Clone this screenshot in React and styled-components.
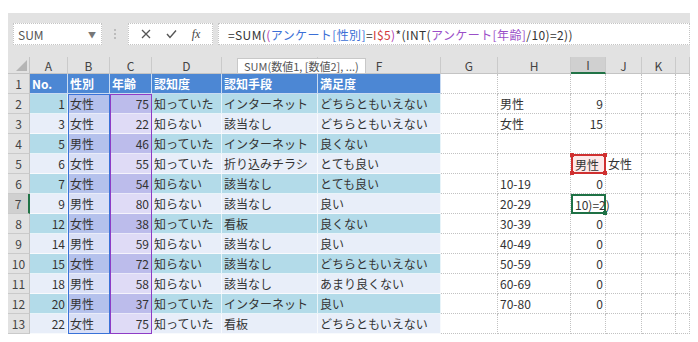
import React from "react";
import styled, { createGlobalStyle } from "styled-components";

const GlobalStyle = createGlobalStyle`
  body {
    margin: 0;
    background: #fff;
    font-family: "Noto Sans CJK JP", "Noto Sans", sans-serif;
  }
`;

const Window = styled.div`
  margin: 13px 0 0 8px;
  width: 682px;
  height: 321px;
  background: #e2e2e2;
  display: flex;
  flex-direction: column;
  overflow: hidden;
`;

const FormulaBar = styled.div`
  display: flex;
  align-items: center;
  height: 22px;
  margin-top: 10px;
  padding-left: 5px;
`;

const NameBox = styled.div`
  width: 89px;
  height: 22px;
  box-sizing: border-box;
  background: #fff;
  border: 1px dotted #c4c4c4;
  display: flex;
  align-items: center;
  justify-content: space-between;
  padding: 0 5px 0 4px;
  font-size: 12px;
  color: #555;
`;

const Caret = styled.span`
  font-size: 8px;
  color: #777;
`;

const Dots = styled.div`
  width: 26px;
  display: flex;
  flex-direction: column;
  align-items: center;
  gap: 2px;
  span {
    width: 2px;
    height: 2px;
    background: #bcbcbc;
  }
`;

const ButtonBox = styled.div`
  width: 85px;
  height: 22px;
  box-sizing: border-box;
  background: #fff;
  border: 1px dotted #c4c4c4;
  display: flex;
  align-items: center;
  justify-content: space-around;
  padding: 0 4px;
  color: #555;
`;

const Fx = styled.span`
  font-family: "Liberation Serif", serif;
  font-style: italic;
  font-size: 12px;
  color: #444;
`;

const FormulaInput = styled.div`
  flex: 1;
  margin-left: 5px;
  height: 22px;
  box-sizing: border-box;
  background: #fff;
  border: 1px dotted #c4c4c4;
  display: flex;
  align-items: center;
  padding-left: 9px;
  font-size: 12px;
  letter-spacing: 0.4px;
  color: #333;
  white-space: nowrap;
`;

const Ref = styled.span`
  color: ${p => p.$color};
`;

const Sheet = styled.div`
  position: relative;
  margin-top: 12px;
  display: grid;
  grid-template-columns: 22px 38px 42px 42px 70px 96px 123px 57px 73px 35px 36px 34px 14px;
  grid-template-rows: 17px repeat(13, 20px);
  font-size: 12px;
`;

const Cell = styled.div`
  grid-column: ${p => p.$c};
  grid-row: ${p => p.$r};
  box-sizing: border-box;
  display: flex;
  align-items: center;
  justify-content: ${p => (p.$right ? "flex-end" : "flex-start")};
  padding: 0 2px 0 2px;
  white-space: nowrap;
  overflow: hidden;
  background: ${p => p.$bg || "#fff"};
  color: ${p => (p.$head ? "#fff" : "#333")};
  font-weight: ${p => (p.$head ? 700 : 400)};
  border-right: 1px ${p => (p.$table ? "solid" : "dotted")} ${p => (p.$table ? "rgba(255,255,255,0.7)" : "#c2c2c2")};
  border-bottom: 1px ${p => (p.$table ? "solid" : "dotted")} ${p => (p.$table ? "rgba(255,255,255,0.7)" : "#c2c2c2")};
`;

const ColHead = styled.div`
  grid-column: ${p => p.$c};
  grid-row: 1;
  box-sizing: border-box;
  display: flex;
  align-items: center;
  justify-content: center;
  font-size: 12px;
  color: #444;
  background: ${p => (p.$active ? "#d0d0d0" : "#e2e2e2")};
  border-right: 1px solid #cacaca;
  border-bottom: ${p => (p.$active ? "2px solid #217346" : "1px solid #c4c4c4")};
`;

const RowHead = styled.div`
  grid-column: 1;
  grid-row: ${p => p.$r};
  box-sizing: border-box;
  display: flex;
  align-items: center;
  justify-content: center;
  font-size: 12px;
  color: #444;
  background: ${p => (p.$active ? "#d0d0d0" : "#e2e2e2")};
  border-bottom: 1px solid #cacaca;
  border-right: ${p => (p.$active ? "2px solid #217346" : "1px solid #c4c4c4")};
`;

const Corner = styled.div`
  grid-column: 1;
  grid-row: 1;
  display: flex;
  align-items: flex-end;
  justify-content: flex-end;
  padding: 0 2px 2px 0;
  border-right: 1px solid #c4c4c4;
  border-bottom: 1px solid #c4c4c4;
`;

const RangeBox = styled.div`
  grid-column: ${p => p.$c};
  grid-row: ${p => p.$r};
  box-sizing: border-box;
  border: ${p => p.$w}px solid ${p => p.$color};
  background: ${p => p.$fill || "transparent"};
  position: relative;
  z-index: 1;
  display: flex;
  align-items: center;
  padding: 0 2px;
  font-size: 12px;
  color: #333;
  white-space: nowrap;
  overflow: visible;
`;

const Handle = styled.span`
  position: absolute;
  width: 4px;
  height: 4px;
  background: ${p => p.$color};
  ${p => (p.$top ? "top: -3px;" : "bottom: -3px;")}
  ${p => (p.$left ? "left: -3px;" : "right: -3px;")}
`;

const Tooltip = styled.div`
  position: absolute;
  left: 229px;
  top: 1px;
  height: 14px;
  padding: 0 6px;
  background: #fff;
  border: 1px solid #c8c8c8;
  font-size: 11px;
  line-height: 14px;
  color: #555;
  white-space: nowrap;
  z-index: 2;
`;

// column E's letter sits under the function tooltip, so it is left blank
const letters = ["A", "B", "C", "D", "", "F", "G", "H", "I", "J", "K", ""];

const table = [
  [1, "女性", 75, "知っていた", "インターネット", "どちらともいえない"],
  [3, "女性", 22, "知らない", "該当なし", "どちらともいえない"],
  [5, "男性", 46, "知っていた", "インターネット", "良くない"],
  [6, "女性", 55, "知っていた", "折り込みチラシ", "とても良い"],
  [7, "女性", 54, "知らない", "該当なし", "とても良い"],
  [9, "男性", 80, "知らない", "該当なし", "良い"],
  [12, "女性", 38, "知っていた", "看板", "良くない"],
  [14, "男性", 59, "知らない", "該当なし", "良い"],
  [15, "女性", 72, "知らない", "該当なし", "どちらともいえない"],
  [18, "男性", 58, "知らない", "該当なし", "あまり良くない"],
  [20, "男性", 37, "知っていた", "インターネット", "良い"],
  [22, "女性", 75, "知っていた", "看板", "どちらともいえない"]
];

const side = {
  2: { H: "男性", I: "9" },
  3: { H: "女性", I: "15" },
  6: { H: "10-19", I: "0" },
  7: { H: "20-29" },
  8: { H: "30-39", I: "0" },
  9: { H: "40-49", I: "0" },
  10: { H: "50-59", I: "0" },
  11: { H: "60-69", I: "0" },
  12: { H: "70-80", I: "0" }
};

const bandBg = ["#b3dbe9", "#b4c1ec", "#bcbceb", "#b3dbe9", "#b3dbe9", "#b3dbe9"];
const lightBg = ["#e8eef9", "#d9dff6", "#dfdbf6", "#e8eef9", "#e8eef9", "#e8eef9"];

function TableRow({ values, row }) {
  const band = row % 2 === 0;
  return values.map((v, i) => (
    <Cell
      key={i}
      $c={i + 2}
      $r={row + 1}
      $table
      $right={typeof v === "number"}
      $bg={band ? bandBg[i] : lightBg[i]}
    >
      {v}
    </Cell>
  ));
}

function PlainRow({ row }) {
  const data = side[row] || {};
  return ["G", "H", "I", "J", "K", "L"].map((k, i) => (
    <Cell key={k} $c={i + 8} $r={row + 1} $right={k === "I"}>
      {data[k] || ""}
    </Cell>
  ));
}

export default function App() {
  const heads = ["No.", "性別", "年齢", "認知度", "認知手段", "満足度"];
  return (
    <>
      <GlobalStyle />
      <Window>
        <FormulaBar>
          <NameBox>
            SUM<Caret>▼</Caret>
          </NameBox>
          <Dots>
            <span />
            <span />
            <span />
          </Dots>
          <ButtonBox>
            <svg width="10" height="10" viewBox="0 0 10 10">
              <path d="M1 1L9 9M9 1L1 9" stroke="#555" strokeWidth="1.3" />
            </svg>
            <svg width="11" height="10" viewBox="0 0 11 10">
              <path d="M1 5L4 8.5L10 1.5" stroke="#555" strokeWidth="1.4" fill="none" />
            </svg>
            <Fx>fx</Fx>
          </ButtonBox>
          <FormulaInput>
            =SUM(<Ref $color="#b03ab0">(</Ref>
            <Ref $color="#3b6fd6">アンケート[性別]</Ref>=
            <Ref $color="#d23a3a">I$5</Ref>
            <Ref $color="#b03ab0">)</Ref>*(INT(
            <Ref $color="#9a4fc8">アンケート[年齢]</Ref>/10)=2))
          </FormulaInput>
        </FormulaBar>
        <Sheet>
          <Corner>
            <svg width="11" height="11" viewBox="0 0 11 11">
              <path d="M11 0L11 11L0 11Z" fill="#b5b5b5" />
            </svg>
          </Corner>
          {letters.map((l, i) => (
            <ColHead key={i} $c={i + 2} $active={l === "I"}>
              {l}
            </ColHead>
          ))}
          {Array.from({ length: 13 }, (_, i) => (
            <RowHead key={i} $r={i + 2} $active={i + 1 === 7}>
              {i + 1}
            </RowHead>
          ))}
          {heads.map((h, i) => (
            <Cell key={h} $c={i + 2} $r={2} $table $head $bg="#4c87d4">
              {h}
            </Cell>
          ))}
          {table.map((values, i) => (
            <TableRow key={i} values={values} row={i + 2} />
          ))}
          {Array.from({ length: 13 }, (_, i) =>
            i + 1 === 5 ? (
              <React.Fragment key={i}>
                {["G", "H"].map((k, j) => (
                  <Cell key={k} $c={j + 8} $r={6} />
                ))}
                <Cell $c={11} $r={6}>女性</Cell>
                <Cell $c={12} $r={6} />
                <Cell $c={13} $r={6} />
              </React.Fragment>
            ) : i + 1 === 7 ? (
              <React.Fragment key={i}>
                <Cell $c={8} $r={8} />
                <Cell $c={9} $r={8}>20-29</Cell>
                <Cell $c={11} $r={8} />
                <Cell $c={12} $r={8} />
                <Cell $c={13} $r={8} />
              </React.Fragment>
            ) : (
              <PlainRow key={i} row={i + 1} />
            )
          )}
          <RangeBox $c={3} $r="3 / span 12" $w={1} $color="#3a72d8" />
          <RangeBox $c={4} $r="3 / span 12" $w={1} $color="#8e3cc6" />
          <RangeBox $c={10} $r={6} $w={2} $color="#cf3030" $fill="#fde9e9">
            男性
            <Handle $color="#cf3030" $top $left />
            <Handle $color="#cf3030" $top />
            <Handle $color="#cf3030" $left />
            <Handle $color="#cf3030" />
          </RangeBox>
          <RangeBox $c={10} $r={8} $w={2} $color="#1e7145" $fill="#fff">
            10)=2)
            <Handle $color="#1e7145" />
          </RangeBox>
          <Tooltip>SUM(数値1, [数値2], ...)</Tooltip>
        </Sheet>
      </Window>
    </>
  );
}
